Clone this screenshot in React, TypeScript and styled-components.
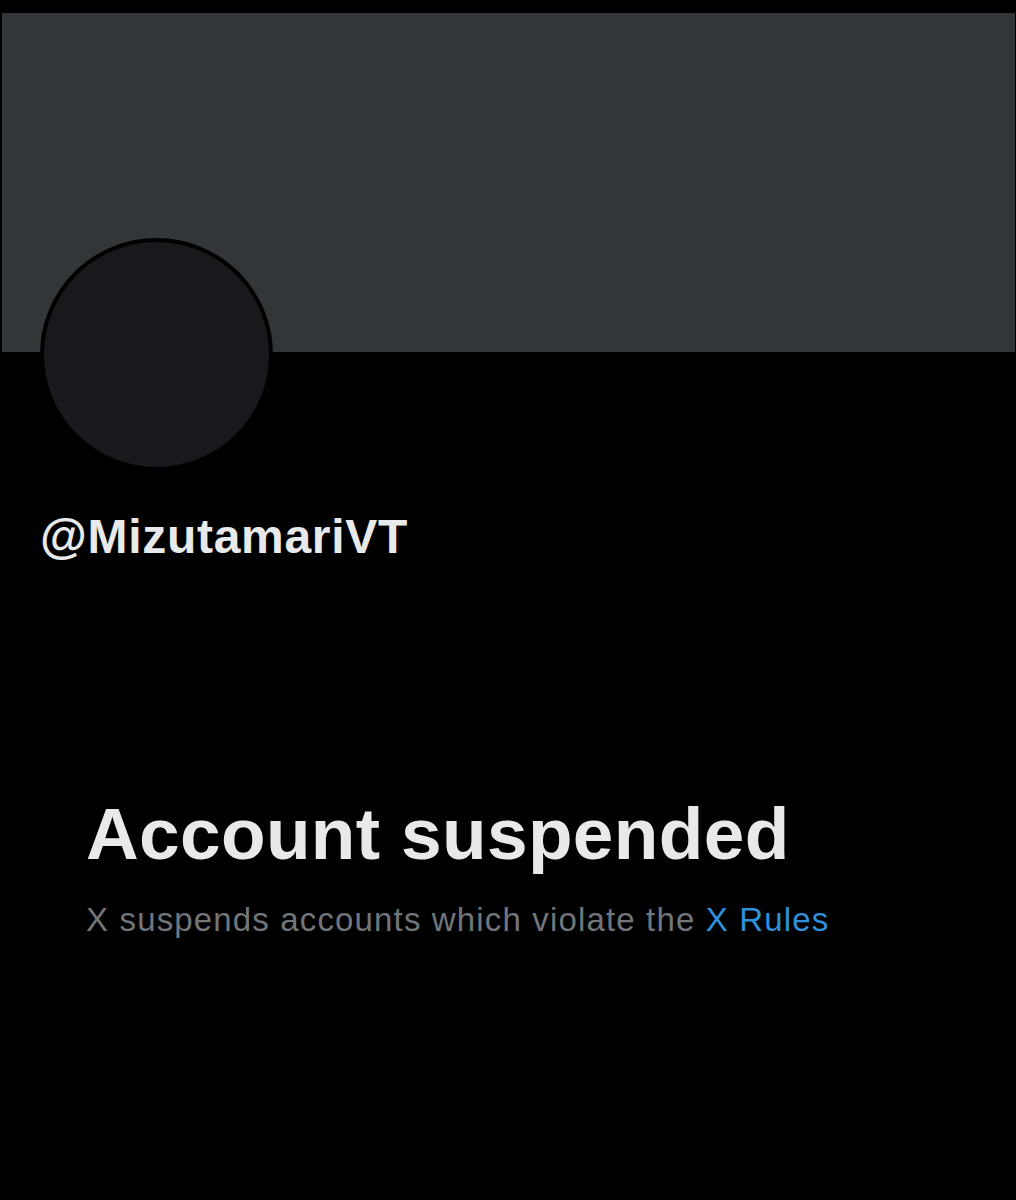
import React from "react";
import styled, { createGlobalStyle } from "styled-components";

const Global = createGlobalStyle`
  html, body {
    margin: 0;
    padding: 0;
    background: #000000;
  }
  body {
    font-family: "Liberation Sans", Arial, sans-serif;
    -webkit-font-smoothing: antialiased;
  }
`;

const Page = styled.main`
  width: 1016px;
  min-height: 1200px;
  background: #000000;
  padding: 13px 1px 0 2px;
  box-sizing: border-box;
  display: flex;
  flex-direction: column;
`;

const Banner = styled.div`
  height: 339px;
  background: #333639;
`;

const ProfileHeader = styled.section`
  display: flex;
  flex-direction: column;
  align-items: flex-start;
  padding-left: 38px;
`;

const Avatar = styled.div`
  width: 233px;
  height: 233px;
  margin-top: -114px;
  border-radius: 50%;
  border: 4px solid #000000;
  background: #18191c;
  box-sizing: border-box;
`;

const Handle = styled.h2`
  margin: 42px 0 0;
  font-size: 48px;
  line-height: 48px;
  font-weight: 700;
  color: #e7e9ea;
  letter-spacing: 0.7px;
`;

const Notice = styled.section`
  display: flex;
  flex-direction: column;
  padding-left: 84px;
  margin-top: 236px;
`;

const Title = styled.h1`
  margin: 0;
  font-size: 73px;
  line-height: 73px;
  font-weight: 700;
  color: #e7e9ea;
  letter-spacing: 0.35px;
`;

const Subtitle = styled.p`
  margin: 33px 0 0;
  font-size: 33px;
  line-height: 33px;
  font-weight: 400;
  color: #71767b;
  letter-spacing: 1.15px;
`;

const RulesLink = styled.a`
  color: #2f90dc;
  text-decoration: none;
`;

export default function App() {
  return (
    <>
      <Global />
      <Page>
        <Banner />
        <ProfileHeader>
          <Avatar />
          <Handle>@MizutamariVT</Handle>
        </ProfileHeader>
        <Notice>
          <Title>Account suspended</Title>
          <Subtitle>
            X suspends accounts which violate the <RulesLink href="#">X Rules</RulesLink>
          </Subtitle>
        </Notice>
      </Page>
    </>
  );
}
